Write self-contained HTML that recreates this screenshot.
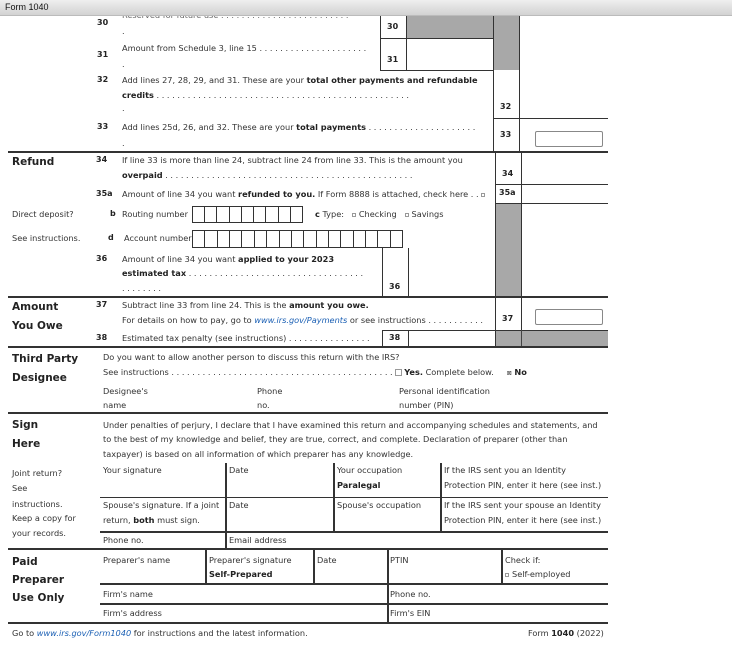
<!DOCTYPE html>
<html><head><meta charset="utf-8">
<style>
*{margin:0;padding:0;box-sizing:border-box}
body{width:732px;height:656px;background:#fff;position:relative;overflow:hidden;font-family:"DejaVu Sans","Liberation Sans",sans-serif;color:#333}
.t{position:absolute;font-size:8.2px;white-space:nowrap;line-height:10px}
.b{font-weight:bold;color:#222}
.n{position:absolute;font-size:8px;font-weight:bold;color:#222;white-space:nowrap;line-height:10px}
.L{position:absolute;font-size:10.5px;font-weight:bold;color:#222;line-height:12px}
.h{position:absolute;height:1px;background:#333}
.hh{position:absolute;height:2px;background:#333}
.v{position:absolute;width:1px;background:#333}
.g{position:absolute;background:#a8a8a8}
.in{position:absolute;border:1px solid #888;border-radius:2px;background:#fff}
.cb{display:inline-block;width:5px;height:5px;border:1px solid #999;vertical-align:middle;margin-right:3px}
.a{color:#1a5fb4;font-style:italic}
.bx{position:absolute;border:1.5px solid #333;display:flex}
.bx i{flex:1;border-right:1.5px solid #333}
.bx i:last-child{border-right:none}
</style></head><body>
<div class="t" style="left:122px;top:10px;color:#666">Reserved for future use . . . . . . . . . . . . . . . . . . . . . . . . .</div>
<div style="position:absolute;left:0;top:0;width:732px;height:16px;background:linear-gradient(#efefef,#d2d2d2);border-bottom:1px solid #bbb"></div>
<div style="position:absolute;left:5px;top:2px;font:9px 'Liberation Sans',sans-serif;color:#111">Form 1040</div>

<!-- lines 30-33 -->
<div class="n" style="left:97px;top:18px">30</div>
<div class="t" style="left:122px;top:26px">.</div>
<div class="n" style="left:97px;top:50px">31</div>
<div class="t" style="left:122px;top:43px">Amount from Schedule 3, line 15 . . . . . . . . . . . . . . . . . . . . .</div>
<div class="t" style="left:122px;top:59px">.</div>
<div class="g" style="left:406px;top:16px;width:87px;height:22px"></div>
<div class="g" style="left:493px;top:16px;width:26px;height:54px"></div>
<div class="v" style="left:380px;top:16px;height:54px"></div>
<div class="v" style="left:406px;top:16px;height:54px"></div>
<div class="h" style="left:380px;top:38px;width:113px"></div>
<div class="h" style="left:380px;top:70px;width:113px"></div>
<div class="n" style="left:387px;top:22px">30</div>
<div class="n" style="left:387px;top:55px">31</div>
<div class="v" style="left:493px;top:16px;height:135px"></div>
<div class="v" style="left:519px;top:16px;height:135px"></div>

<div class="n" style="left:97px;top:75px">32</div>
<div class="t" style="left:122px;top:75px">Add lines 27, 28, 29, and 31. These are your <span class="b">total other payments and refundable</span></div>
<div class="t" style="left:122px;top:90px"><span class="b">credits</span> . . . . . . . . . . . . . . . . . . . . . . . . . . . . . . . . . . . . . . . . . . . . . . . . .</div>
<div class="t" style="left:122px;top:103px">.</div>
<div class="n" style="left:500px;top:102px">32</div>
<div class="h" style="left:493px;top:118px;width:115px"></div>
<div class="n" style="left:97px;top:122px">33</div>
<div class="t" style="left:122px;top:122px">Add lines 25d, 26, and 32. These are your <span class="b">total payments</span> . . . . . . . . . . . . . . . . . . . . .</div>
<div class="t" style="left:122px;top:138px">.</div>
<div class="n" style="left:500px;top:130px">33</div>
<div class="in" style="left:535px;top:131px;width:68px;height:16px"></div>
<div class="hh" style="left:8px;top:151px;width:600px"></div>

<!-- Refund -->
<div class="L" style="left:12px;top:156px">Refund</div>
<div class="n" style="left:96px;top:155px">34</div>
<div class="t" style="left:122px;top:155px">If line 33 is more than line 24, subtract line 24 from line 33. This is the amount you</div>
<div class="t" style="left:122px;top:170px"><span class="b">overpaid</span> . . . . . . . . . . . . . . . . . . . . . . . . . . . . . . . . . . . . . . . . . . . . . . . .</div>
<div class="v" style="left:495px;top:152px;height:145px"></div>
<div class="v" style="left:521px;top:152px;height:145px"></div>
<div class="n" style="left:502px;top:169px">34</div>
<div class="h" style="left:495px;top:184px;width:113px"></div>
<div class="n" style="left:96px;top:189px">35a</div>
<div class="t" style="left:122px;top:189px">Amount of line 34 you want <span class="b">refunded to you.</span> If Form 8888 is attached, check here . . <span class="cb" style="width:4px;height:4px"></span></div>
<div class="n" style="left:499px;top:188px">35a</div>
<div class="h" style="left:495px;top:203px;width:113px"></div>
<div class="g" style="left:496px;top:204px;width:25px;height:93px"></div>

<div class="t" style="left:12px;top:209px">Direct deposit?</div>
<div class="n" style="left:110px;top:209px">b</div>
<div class="t" style="left:122px;top:209px">Routing number</div>
<div class="bx" style="left:192px;top:206px;width:111px;height:17px"><i></i><i></i><i></i><i></i><i></i><i></i><i></i><i></i><i></i></div>
<div class="t" style="left:315px;top:209px"><span class="b">c</span> Type: &nbsp;&nbsp;<span class="cb" style="width:4px;height:4px"></span>Checking &nbsp;&nbsp;<span class="cb" style="width:4px;height:4px"></span>Savings</div>
<div class="t" style="left:12px;top:233px">See instructions.</div>
<div class="n" style="left:108px;top:233px">d</div>
<div class="t" style="left:124px;top:233px">Account number</div>
<div class="bx" style="left:192px;top:230px;width:211px;height:18px"><i></i><i></i><i></i><i></i><i></i><i></i><i></i><i></i><i></i><i></i><i></i><i></i><i></i><i></i><i></i><i></i><i></i></div>

<div class="n" style="left:96px;top:254px">36</div>
<div class="t" style="left:122px;top:254px">Amount of line 34 you want <span class="b">applied to your 2023</span></div>
<div class="t" style="left:122px;top:268px"><span class="b">estimated tax</span> . . . . . . . . . . . . . . . . . . . . . . . . . . . . . . . . . .</div>
<div class="t" style="left:122px;top:283px">. . . . . . . .</div>
<div class="v" style="left:382px;top:248px;height:49px"></div>
<div class="v" style="left:408px;top:248px;height:49px"></div>
<div class="n" style="left:389px;top:282px">36</div>
<div class="hh" style="left:8px;top:296px;width:600px"></div>

<!-- Amount you owe -->
<div class="L" style="left:12px;top:301px">Amount</div>
<div class="L" style="left:12px;top:320px">You Owe</div>
<div class="n" style="left:96px;top:300px">37</div>
<div class="t" style="left:122px;top:300px">Subtract line 33 from line 24. This is the <span class="b">amount you owe.</span></div>
<div class="t" style="left:122px;top:315px">For details on how to pay, go to <span class="a">www.irs.gov/Payments</span> or see instructions . . . . . . . . . . .</div>
<div class="v" style="left:495px;top:298px;height:49px"></div>
<div class="v" style="left:521px;top:298px;height:49px"></div>
<div class="n" style="left:502px;top:314px">37</div>
<div class="in" style="left:535px;top:309px;width:68px;height:16px"></div>
<div class="h" style="left:382px;top:330px;width:226px"></div>
<div class="g" style="left:496px;top:331px;width:112px;height:16px"></div>
<div class="v" style="left:521px;top:330px;height:17px;background:#444"></div>
<div class="n" style="left:96px;top:333px">38</div>
<div class="t" style="left:122px;top:333px">Estimated tax penalty (see instructions) . . . . . . . . . . . . . . . .</div>
<div class="v" style="left:382px;top:330px;height:17px"></div>
<div class="v" style="left:408px;top:330px;height:17px"></div>
<div class="n" style="left:389px;top:333px">38</div>
<div class="hh" style="left:8px;top:346px;width:600px"></div>

<!-- Third party -->
<div class="L" style="left:12px;top:353px">Third Party</div>
<div class="L" style="left:12px;top:372px">Designee</div>
<div class="t" style="left:103px;top:352px">Do you want to allow another person to discuss this return with the IRS?</div>
<div class="t" style="left:103px;top:367px">See instructions . . . . . . . . . . . . . . . . . . . . . . . . . . . . . . . . . . . . . . . . . . . <span class="cb" style="width:7px;height:7px;margin-right:2px"></span><span class="b">Yes.</span> Complete below. &nbsp;&nbsp;&nbsp;&nbsp;<span style="font-size:6px">&#8864;</span> <span class="b">No</span></div>
<div class="t" style="left:103px;top:386px">Designee's</div>
<div class="t" style="left:103px;top:400px">name</div>
<div class="t" style="left:257px;top:386px">Phone</div>
<div class="t" style="left:257px;top:400px">no.</div>
<div class="t" style="left:399px;top:386px">Personal identification</div>
<div class="t" style="left:399px;top:400px">number (PIN)</div>
<div class="hh" style="left:8px;top:412px;width:600px"></div>

<!-- Sign here -->
<div class="L" style="left:12px;top:419px">Sign</div>
<div class="L" style="left:12px;top:438px">Here</div>
<div class="t" style="left:103px;top:420px">Under penalties of perjury, I declare that I have examined this return and accompanying schedules and statements, and</div>
<div class="t" style="left:103px;top:434px">to the best of my knowledge and belief, they are true, correct, and complete. Declaration of preparer (other than</div>
<div class="t" style="left:103px;top:449px">taxpayer) is based on all information of which preparer has any knowledge.</div>
<div class="t" style="left:12px;top:468px">Joint return?</div>
<div class="t" style="left:12px;top:483px">See</div>
<div class="t" style="left:12px;top:499px">instructions.</div>
<div class="t" style="left:12px;top:513px">Keep a copy for</div>
<div class="t" style="left:12px;top:528px">your records.</div>
<div class="v" style="left:225px;top:463px;height:85px;width:1.5px"></div>
<div class="v" style="left:333px;top:463px;height:68px;width:1.5px"></div>
<div class="v" style="left:440px;top:463px;height:68px;width:1.5px"></div>
<div class="h" style="left:100px;top:497px;width:508px"></div>
<div class="h" style="left:100px;top:531px;width:508px;height:1.5px"></div>
<div class="t" style="left:103px;top:465px">Your signature</div>
<div class="t" style="left:229px;top:465px">Date</div>
<div class="t" style="left:337px;top:465px">Your occupation</div>
<div class="t" style="left:337px;top:480px"><span class="b">Paralegal</span></div>
<div class="t" style="left:444px;top:465px">If the IRS sent you an Identity</div>
<div class="t" style="left:444px;top:480px">Protection PIN, enter it here (see inst.)</div>
<div class="t" style="left:103px;top:500px">Spouse's signature. If a joint</div>
<div class="t" style="left:103px;top:515px">return, <span class="b">both</span> must sign.</div>
<div class="t" style="left:229px;top:500px">Date</div>
<div class="t" style="left:337px;top:500px">Spouse's occupation</div>
<div class="t" style="left:444px;top:500px">If the IRS sent your spouse an Identity</div>
<div class="t" style="left:444px;top:515px">Protection PIN, enter it here (see inst.)</div>
<div class="t" style="left:103px;top:535px">Phone no.</div>
<div class="t" style="left:229px;top:535px">Email address</div>
<div class="hh" style="left:8px;top:548px;width:600px"></div>

<!-- Paid preparer -->
<div class="L" style="left:12px;top:556px">Paid</div>
<div class="L" style="left:12px;top:574px">Preparer</div>
<div class="L" style="left:12px;top:592px">Use Only</div>
<div class="v" style="left:205px;top:549px;height:34px;width:1.5px"></div>
<div class="v" style="left:313px;top:549px;height:34px;width:1.5px"></div>
<div class="v" style="left:387px;top:549px;height:73px;width:1.5px"></div>
<div class="v" style="left:501px;top:549px;height:34px;width:1.5px"></div>
<div class="h" style="left:100px;top:583px;width:508px;height:1.5px"></div>
<div class="h" style="left:100px;top:603px;width:508px;height:1.5px"></div>
<div class="t" style="left:103px;top:555px">Preparer's name</div>
<div class="t" style="left:209px;top:555px">Preparer's signature</div>
<div class="t" style="left:209px;top:569px"><span class="b">Self-Prepared</span></div>
<div class="t" style="left:317px;top:555px">Date</div>
<div class="t" style="left:390px;top:555px">PTIN</div>
<div class="t" style="left:505px;top:555px">Check if:</div>
<div class="t" style="left:505px;top:569px"><span class="cb" style="width:4px;height:4px"></span>Self-employed</div>
<div class="t" style="left:103px;top:589px">Firm's name</div>
<div class="t" style="left:390px;top:589px">Phone no.</div>
<div class="t" style="left:103px;top:608px">Firm's address</div>
<div class="t" style="left:390px;top:608px">Firm's EIN</div>
<div class="hh" style="left:8px;top:622px;width:600px"></div>
<div class="t" style="left:12px;top:628px">Go to <span class="a">www.irs.gov/Form1040</span> for instructions and the latest information.</div>
<div class="t" style="left:528px;top:628px">Form <span class="b">1040</span> (2022)</div>
</body></html>
